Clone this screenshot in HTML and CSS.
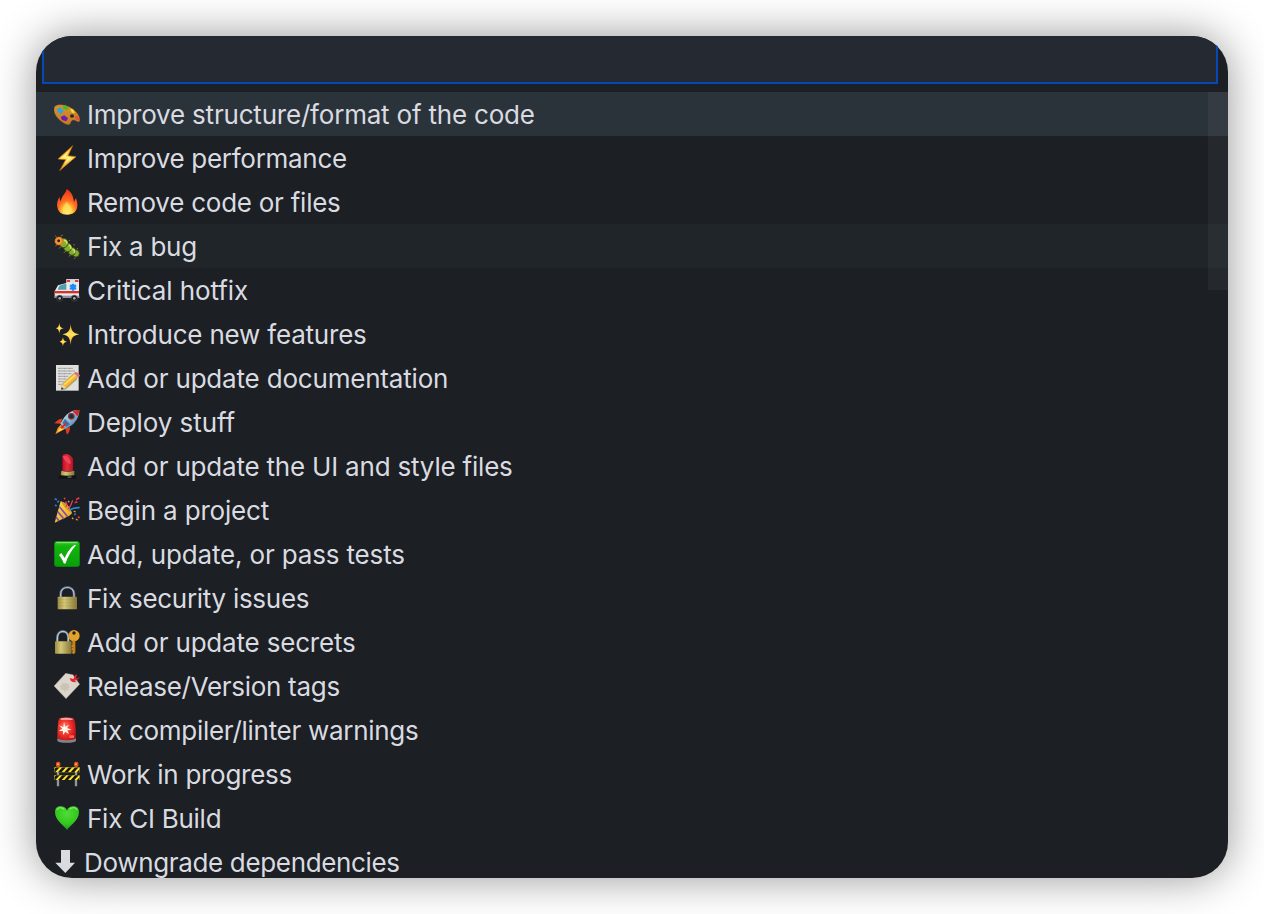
FILE: index.html
```html
<!DOCTYPE html>
<html lang="en">
<head>
<meta charset="utf-8">
<title>Commit type picker</title>
<link rel="stylesheet" href="styles.css">
</head>
<body>
<svg class="defs" aria-hidden="true">
  <defs>
    <linearGradient id="gold" x1="0" y1="0" x2="0" y2="1"><stop offset="0" stop-color="#ffa51d"/><stop offset=".5" stop-color="#ffe45c"/><stop offset="1" stop-color="#f59a10"/></linearGradient>
    <linearGradient id="wood" x1="0" y1="0" x2="0" y2="1"><stop offset="0" stop-color="#d9912f"/><stop offset="1" stop-color="#c07c26"/></linearGradient>
    <radialGradient id="flame" cx=".5" cy=".9" r=".85"><stop offset="0" stop-color="#fff9a8"/><stop offset=".3" stop-color="#ffc43a"/><stop offset=".55" stop-color="#ff6a21"/><stop offset="1" stop-color="#ee3519"/></radialGradient>
    <linearGradient id="brass" x1="0" y1="0" x2="1" y2="0"><stop offset="0" stop-color="#9d8c3f"/><stop offset=".35" stop-color="#d3c878"/><stop offset="1" stop-color="#887535"/></linearGradient>
    <linearGradient id="green" x1="0" y1="0" x2="0" y2="1"><stop offset="0" stop-color="#37c62c"/><stop offset=".2" stop-color="#12b50c"/><stop offset="1" stop-color="#0a9d0a"/></linearGradient>
    <radialGradient id="heart" cx=".5" cy=".3" r=".7"><stop offset="0" stop-color="#4fdc35"/><stop offset=".6" stop-color="#37c920"/><stop offset="1" stop-color="#1d9d17"/></radialGradient>
    <linearGradient id="red" x1="0" y1="0" x2="1" y2="0"><stop offset="0" stop-color="#b80d24"/><stop offset=".45" stop-color="#e82b3c"/><stop offset="1" stop-color="#b80f27"/></linearGradient>
    <linearGradient id="cone" x1="0" y1="0" x2="1" y2="1"><stop offset="0" stop-color="#ffdf5a"/><stop offset="1" stop-color="#e9a218"/></linearGradient>
    <linearGradient id="hull" x1="0" y1="0" x2="1" y2="1"><stop offset="0" stop-color="#e4f0f5"/><stop offset=".5" stop-color="#8db9d4"/><stop offset="1" stop-color="#2d5f98"/></linearGradient>
    <radialGradient id="siren" cx=".4" cy=".45" r=".65"><stop offset="0" stop-color="#ff8a75"/><stop offset=".5" stop-color="#f0342b"/><stop offset="1" stop-color="#b51015"/></radialGradient>
    <clipPath id="boards"><path d="M1 19H77V34H1ZM1 43H77V57H1Z"/></clipPath>
  </defs>
</svg>
<main class="picker">
  <div class="search"><div class="search-input"></div></div>
  <ul class="list">
    <li class="item selected">
      <svg class="icon" viewBox="0 0 78 78"><path d="M4 15C14 8 37 11 53 22C66 30 80 47 77 59C75 68 66 57 58 57C49 57 52 69 44 71C31 72 5 50 1 34C-1 25 0 18 4 15Z" fill="url(#wood)" stroke="#8b5a20" stroke-width="1"/><path d="M26 15L34 12L43 20L39 27L28 24Z" fill="#42bd27"/><path d="M10 23L19 19L29 31L22 38L11 33Z" fill="#28a5e4"/><path d="M20 48L31 43L42 52L37 61L24 57Z" fill="#7617ad"/><path d="M48 23L57 25L63 36L54 35Z" fill="#f4df35"/><path d="M61 44L71 46L77 58L67 56Z" fill="#ef4a48"/><ellipse cx="54" cy="45" rx="6" ry="5" fill="#26292c"/></svg>
      <span class="label w1">Improve structure/format of the code</span></li>
    <li class="item">
      <svg class="icon" viewBox="0 0 78 78"><path d="M56 2L12 42L35 44L17 77L66 35L42 32Z" fill="url(#gold)" stroke="#c76e08" stroke-width="2"/><path d="M45 16L24 38L42 39L31 57L54 38L34 35Z" fill="#fff39a"/></svg>
      <span class="label w2">Improve performance</span></li>
    <li class="item">
      <svg class="icon" viewBox="0 0 78 78"><path d="M38 0C36 12 24 19 20 37C17 33 17 28 17 23C10 33 8 45 10 54C12 69 22 77 40 77C57 77 69 68 70 51C71 41 67 32 66 27C63 31 62 35 60 39C58 20 51 8 38 0Z" fill="url(#flame)"/><path d="M38 38C33 46 27 52 26 60C25 69 31 74 40 74C50 74 56 67 54 57C51 60 49 58 48 54C46 47 42 43 38 38Z" fill="#ffe05a" opacity=".75"/></svg>
      <span class="label w3">Remove code or files</span></li>
    <li class="item hovered">
      <svg class="icon" viewBox="0 0 78 78"><path d="M8 12L3 8M20 9L27 6M8 34L5 40M20 41L15 47M35 54L29 60M50 66L44 70M65 74L60 77M44 22L48 23M58 35L63 36M69 47L72 46" stroke="#b17047" stroke-width="2.5"/><g fill="#85ad30" stroke="#304814" stroke-width="2.5"><ellipse cx="66" cy="61" rx="10" ry="11"/><ellipse cx="54" cy="55" rx="11" ry="12"/><ellipse cx="41" cy="43" rx="12" ry="13"/><ellipse cx="29" cy="30" rx="13" ry="14"/></g><path d="M30 22Q41 23 38 33M44 37Q53 39 50 48M55 49Q65 51 61 60" stroke="#cee366" stroke-width="5" fill="none"/><circle cx="15" cy="24" r="13" fill="#e88122"/><circle cx="15" cy="24" r="8" fill="#f4a43e"/><circle cx="14" cy="23" r="4.5" fill="#351f12"/></svg>
      <span class="label w4">Fix a bug</span></li>
    <li class="item">
      <svg class="icon" viewBox="0 0 78 78"><path d="M37 7H75V62H2V43L12 25L37 18Z" fill="#e8ebea"/><path d="M16 26L33 20H37V38H11Z" fill="#529daf"/><path d="M37 7H75V16H37Z" fill="#d6dae0"/><path d="M38 9H48V15H38ZM63 9H73V15H63Z" fill="#d83844"/><path d="M1 42H75V49H1Z" fill="#dc2e2b"/><path d="M57 20V41M48 25L66 36M48 36L66 25" stroke="#198ef0" stroke-width="7"/><path d="M2 56H76V63H2Z" fill="#8e959b"/><g fill="#161719" stroke="#4d5054" stroke-width="2"><circle cx="17" cy="64" r="9"/><circle cx="61" cy="64" r="9"/></g><circle cx="17" cy="64" r="4" fill="#aaa"/><circle cx="61" cy="64" r="4" fill="#aaa"/></svg>
      <span class="label w5">Critical hotfix</span></li>
    <li class="item">
      <svg class="icon" viewBox="0 0 78 78"><g fill="url(#gold)"><path d="M50 9C52 30 56 36 76 40C56 44 52 50 50 72C48 50 43 44 25 40C43 36 48 30 50 9Z"/><path d="M16 6C18 17 19 20 29 22C19 24 18 27 16 38C14 27 13 24 5 22C13 20 14 17 16 6Z"/><path d="M27 48C28 57 30 60 39 62C30 64 28 67 27 76C25 67 24 64 16 62C24 60 25 57 27 48Z"/></g></svg>
      <span class="label w6">Introduce new features</span></li>
    <li class="item">
      <svg class="icon" viewBox="0 0 78 78"><path d="M6 0H74V77H6Z" fill="#dfdfdc"/><path d="M13 10H56M13 18H62M13 26H53M13 34H44M13 42H38M13 50H31M13 58H26" stroke="#77797b" stroke-width="2.5" stroke-dasharray="7 2 4 2"/><path d="M27 67L62 34L70 43L36 73L23 76Z" fill="#5b5548" opacity=".45"/><path d="M25 57L61 24L72 36L37 68L22 73Z" fill="#f3b52b" stroke="#b88720" stroke-width="1.5"/><path d="M29 57L63 27L67 31L33 61Z" fill="#ffdc65"/><path d="M59 25L65 21L76 33L71 38Z" fill="#a3b6c0"/><path d="M64 21Q72 20 78 32L74 36L61 25Z" fill="#ed6874"/><path d="M25 57L37 68L22 73Z" fill="#e9cda3"/><path d="M23 67L29 71L21 74Z" fill="#333"/></svg>
      <span class="label w7">Add or update documentation</span></li>
    <li class="item">
      <svg class="icon" viewBox="0 0 78 78"><path d="M25 29Q13 28 1 43L20 44ZM48 54Q49 68 39 77L34 59Z" fill="#e33b25"/><path d="M20 47L34 59L20 67L4 76L11 57Z" fill="#ff8b22"/><path d="M20 53L28 61L10 70Z" fill="#ffe64b"/><path d="M76 3C58 2 42 10 31 25L19 44L34 60L53 49C69 36 76 19 76 3Z" fill="url(#hull)"/><path d="M76 3C69 2 62 4 56 7L70 22C74 15 76 9 76 3Z" fill="#d32b24"/><path d="M33 29L25 42L37 54L48 46Z" fill="#3478b3"/><circle cx="52" cy="22" r="10" fill="#8e2b30"/><circle cx="52" cy="22" r="6" fill="#192e42"/><path d="M18 56L37 39L40 43L24 60Z" fill="#d72c27"/></svg>
      <span class="label w8">Deploy stuff</span></li>
    <li class="item">
      <svg class="icon" viewBox="0 0 78 78"><path d="M25 9Q26 2 36 3Q49 4 57 17V55H25Z" fill="url(#red)"/><path d="M26 9Q40 5 50 24L49 34Q31 28 26 9Z" fill="#ed4555"/><path d="M22 53Q40 59 61 53V69H20Z" fill="url(#brass)"/><path d="M17 66Q40 70 65 66L68 77H12Z" fill="#121315"/><path d="M42 70H54L51 75H40Z" fill="#53565a"/></svg>
      <span class="label w9">Add or update the UI and style files</span></li>
    <li class="item">
      <svg class="icon" viewBox="0 0 78 78"><path d="M20 13Q45 20 54 49L46 56L2 77Z" fill="url(#cone)"/><path d="M16 29L41 59M11 44L30 66M6 60L15 72" stroke="#8050ab" stroke-width="5"/><path d="M20 13Q45 20 54 49Q34 39 20 13Z" fill="#d59a24"/><path d="M35 30Q43 23 34 14M43 36Q52 24 56 10" stroke="#e73b73" stroke-width="4" fill="none"/><path d="M47 39Q58 31 77 32" stroke="#2789d9" stroke-width="5" fill="none"/><path d="M30 3L34 6M66 8L76 2M62 17L70 14M72 59L77 63" stroke="#e3344e" stroke-width="5"/><path d="M2 5L9 8M10 16L15 12M3 24L8 27M61 54L65 50" stroke="#3678d8" stroke-width="5"/><path d="M42 12L46 16M59 42L65 45M66 66L71 70M54 62L58 66" stroke="#ef9f25" stroke-width="4"/></svg>
      <span class="label w10">Begin a project</span></li>
    <li class="item">
      <svg class="icon" viewBox="0 0 78 78"><rect x="1" y="1" width="76" height="76" rx="9" fill="url(#green)" stroke="#078a10" stroke-width="2"/><path d="M7 5H70" stroke="#8ce681" stroke-width="3"/><path d="M15 42L22 36L32 51C41 30 50 20 62 11L66 13C53 27 43 44 34 68L29 67C27 58 20 49 15 42Z" fill="#fff"/></svg>
      <span class="label w11">Add, update, or pass tests</span></li>
    <li class="item">
      <svg class="icon" viewBox="0 0 78 78"><path d="M20 39V27C20 0 60 0 60 27V39" stroke="#546274" stroke-width="8" fill="none"/><path d="M20 39V27C20 1 60 1 60 27V39" stroke="#b8c8df" stroke-width="3.5" fill="none"/><rect x="11" y="35" width="58" height="38" rx="2" fill="url(#brass)"/><path d="M12 44H68M12 53H68M12 62H68" stroke="#786e38" stroke-width="1" opacity=".4"/></svg>
      <span class="label w12">Fix security issues</span></li>
    <li class="item">
      <svg class="icon" viewBox="0 0 78 78"><path d="M10 39V27C10 0 43 0 43 27V39" stroke="#566677" stroke-width="8" fill="none"/><path d="M10 39V27C10 1 43 1 43 27V39" stroke="#b8cad9" stroke-width="4" fill="none"/><rect x="3" y="37" width="50" height="37" rx="2" fill="url(#brass)"/><path d="M55 32H64V71L58 76L54 71L56 65L52 61L56 56L52 52L55 47Z" fill="#d48b1b"/><path fill-rule="evenodd" d="M60 3A17 17 0 1 0 60 37A17 17 0 1 0 60 3ZM60 7A5 5 0 1 1 60 17A5 5 0 1 1 60 7Z" fill="#e5a22a"/><path d="M60 32V72" stroke="#b46b0e" stroke-width="2"/></svg>
      <span class="label w13">Add or update secrets</span></li>
    <li class="item">
      <svg class="icon" viewBox="0 0 78 78"><path d="M35 1L57 5L77 34L36 77L0 39Z" fill="#dcd5cb" stroke="#a89f95" stroke-width="1"/><path d="M35 28L38 34L45 31L43 38L49 42L43 46L45 53L37 51L32 57L28 50L20 51L22 44L16 40L24 36L24 30L31 32Z" fill="#cbc3b7"/><path d="M47 15L58 18L65 4L69 6L65 17L78 12L68 22L61 23L70 28L56 27L50 23Z" fill="#e8252d"/></svg>
      <span class="label w14">Release/Version tags</span></li>
    <li class="item">
      <svg class="icon" viewBox="0 0 78 78"><path d="M10 64Q38 70 66 64V71Q63 77 38 77Q13 77 10 71Z" fill="#818488"/><path d="M16 4Q38-2 59 4Q65 7 66 60Q64 70 38 70Q11 70 10 61Q11 8 16 4Z" fill="url(#siren)"/><path d="M19 4Q38 0 57 5L55 9H21Z" fill="#f2a09a"/><path d="M30 15L34 29L45 23L39 33L53 38L40 40L45 52L34 44L27 54L27 42L14 42L25 35L15 25L28 30Z" fill="#fff4e8"/><path d="M46 55H60V63H46Z" fill="#ff6259"/></svg>
      <span class="label w15">Fix compiler/linter warnings</span></li>
    <li class="item">
      <svg class="icon" viewBox="0 0 78 78"><path d="M12 15V76M66 15V76" stroke="#92969b" stroke-width="7"/><path d="M1 19H77V34H1ZM1 43H77V57H1Z" fill="#ffe32b"/><g clip-path="url(#boards)"><path d="M-5 37L15 15M14 37L34 15M33 37L53 15M52 37L72 15M71 37L91 15M-5 61L15 39M14 61L34 39M33 61L53 39M52 61L72 39M71 61L91 39" stroke="#171813" stroke-width="8"/></g><rect x="6" y="2" width="13" height="16" rx="5" fill="#e94b20"/><rect x="60" y="2" width="13" height="16" rx="5" fill="#e94b20"/><circle cx="12" cy="10" r="3" fill="#ffc044"/><circle cx="66" cy="10" r="3" fill="#ffc044"/></svg>
      <span class="label w16">Work in progress</span></li>
    <li class="item">
      <svg class="icon" viewBox="0 0 78 78"><path d="M39 75C32 63 3 48 3 22C3 8 10 4 20 4C30 4 37 9 39 17C41 9 48 4 58 4C69 4 75 10 75 22C75 48 46 63 39 75Z" fill="url(#heart)"/><path d="M8 15Q17 2 30 13M47 13Q60 2 70 15" stroke="#9cf583" stroke-width="4" fill="none" opacity=".7"/></svg>
      <span class="label w17">Fix CI Build</span></li>
    <li class="item">
      <svg class="icon arrow" viewBox="0 0 69 78"><path d="M21 3H48V41H63L34 72L4 41H21Z" fill="#d9dbe0"/></svg>
      <span class="label w18">Downgrade dependencies</span></li>
  </ul>
  <div class="scroll-thumb"></div>
</main>
</body>
</html>
```
FILE: styles.css
```css
body {
  margin: 0;
  padding: 36px;
  background: #fff;
  font-family: Inter, "Liberation Sans", sans-serif;
}

.defs {
  position: absolute;
  width: 0;
  height: 0;
}

.picker {
  position: relative;
  box-sizing: border-box;
  width: 1192px;
  height: 842px;
  overflow: hidden;
  border-radius: 36px;
  background: #1c1f24;
  box-shadow: 0 0 44px rgba(0, 0, 0, 0.42);
}

.search {
  box-sizing: border-box;
  height: 56px;
  padding: 0 10px 8px 6px;
}

.search-input {
  box-sizing: border-box;
  height: 48px;
  border: 2px solid #0648b5;
  border-top: 0;
  background: #252931;
}

.list {
  margin: 0;
  padding: 0;
  list-style: none;
}

.item {
  display: flex;
  align-items: center;
  box-sizing: border-box;
  height: 44px;
  padding-left: 18px;
  gap: 7px;
  color: #d9dbe0;
  font-size: 26px;
  line-height: 44px;
  white-space: nowrap;
}

.selected { background: #2b333a; }
.hovered { background: #1f2528; }

.icon {
  flex: none;
  width: 26px;
  height: 26px;
}

.arrow { width: 23px; }

.label {
  padding-top: 2px;
  line-height: 42px;
}

/* Per-label tracking */
.w1 { letter-spacing: -0.2px; }
.w2 { letter-spacing: -0.29px; }
.w3 { letter-spacing: -0.25px; }
.w4 { letter-spacing: -0.27px; }
.w5 { letter-spacing: -0.1px; }
.w6 { letter-spacing: -0.2px; }
.w7 { letter-spacing: -0.19px; }
.w8 { letter-spacing: -0.08px; }
.w9 { letter-spacing: -0.2px; }
.w10 { letter-spacing: -0.17px; }
.w11 { letter-spacing: -0.16px; }
.w12 { letter-spacing: -0.29px; }
.w13 { letter-spacing: -0.19px; }
.w14 { letter-spacing: -0.3px; }
.w15 { letter-spacing: -0.29px; }
.w16 { letter-spacing: -0.28px; }
.w17 { letter-spacing: -0.25px; }
.w18 { letter-spacing: -0.34px; }

.scroll-thumb {
  position: absolute;
  top: 56px;
  right: 0;
  width: 20px;
  height: 198px;
  background: rgba(255, 255, 255, 0.045);
}
```
